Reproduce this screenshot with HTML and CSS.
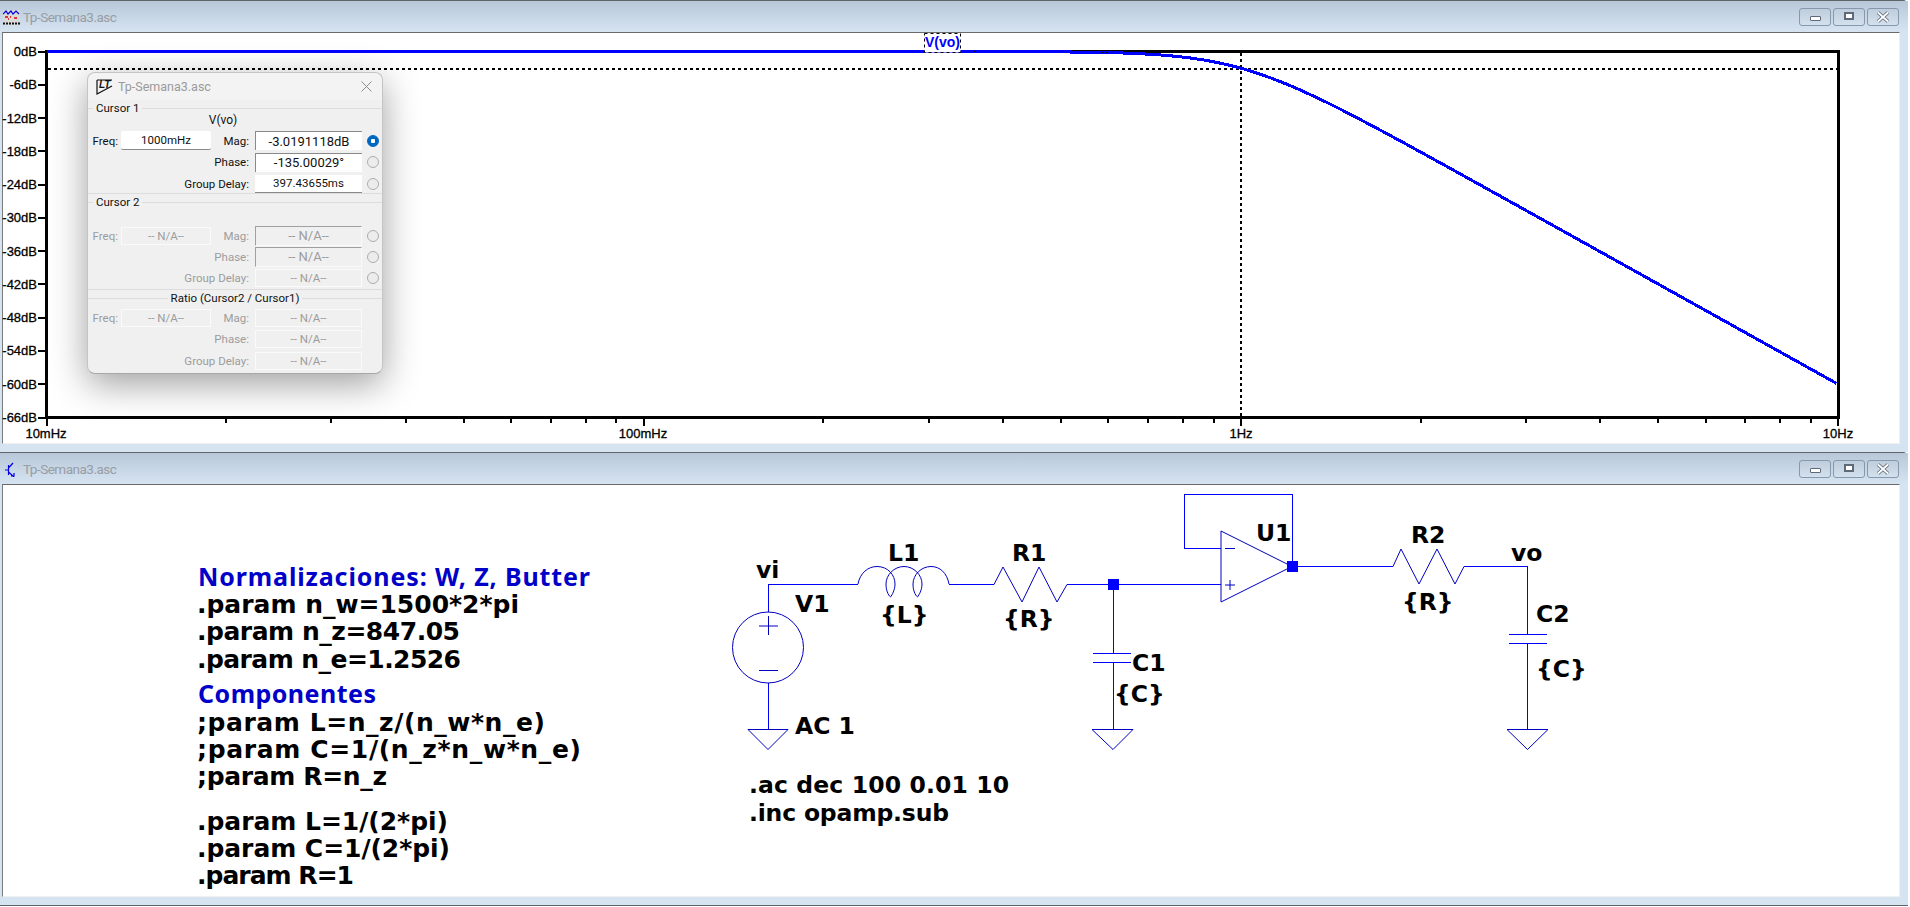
FILE: index.html
```html
<!DOCTYPE html>
<html lang="es">
<head>
    <meta charset="UTF-8">
    <title>Tp-Semana3.asc</title>
    <link rel="stylesheet" href="styles.css">
</head>
<body>
    <!-- ventana de la grafica -->
    <div class="win win-plot">
        <div class="win-title">
            <svg class="win-icon" width="17" height="16" viewBox="0 0 17 16">
                <rect x="0" y="1" width="17" height="15" fill="#d9d9d9"/>
                <path d="M0 5 3 2 5 5 8 2 10 5 13 2 16 5" fill="none" stroke="#0000e0" stroke-width="1.2"/>
                <path d="M2 8H5M7 8H8M11 9H14M5 10H6" stroke="#e00000" stroke-width="1.4"/>
                <path d="M0 14.5H17" stroke="#111" stroke-width="2" stroke-dasharray="2 1"/>
            </svg>
            <span class="win-name">Tp-Semana3.asc</span>
            <div class="win-btns">
                <button class="win-btn"><span class="ico-min"></span></button>
                <button class="win-btn"><span class="ico-max"></span></button>
                <button class="win-btn">
                    <svg width="14" height="12" viewBox="0 0 14 12">
                        <path d="M2 1.5 12 10.5M12 1.5 2 10.5" stroke="#5e6a78" stroke-width="3.6"/>
                        <path d="M2 1.5 12 10.5M12 1.5 2 10.5" stroke="#fff" stroke-width="1.8"/>
                    </svg>
                </button>
            </div>
        </div>
        <div class="win-client">
            <svg class="canvas" width="1896" height="410" viewBox="3 33 1896 410">
                <path id="ticks" class="ticks"/>
                <rect class="frame" x="46.5" y="51.5" width="1791.5" height="366"/>
                <path class="cursor-h" d="M48 69H1837"/>
                <path class="cursor-v" d="M1241 53V416"/>
                <polyline id="curve" class="curve"/>
                <rect class="trace-box" x="924.5" y="33.5" width="36" height="19"/>
                <text class="trace-name" x="942.5" y="47">V(vo)</text>
                <g class="axis-y">
                    <text x="37" y="56">0dB</text>
                    <text x="37" y="89">-6dB</text>
                    <text x="37" y="123">-12dB</text>
                    <text x="37" y="156">-18dB</text>
                    <text x="37" y="189">-24dB</text>
                    <text x="37" y="222">-30dB</text>
                    <text x="37" y="256">-36dB</text>
                    <text x="37" y="289">-42dB</text>
                    <text x="37" y="322">-48dB</text>
                    <text x="37" y="355">-54dB</text>
                    <text x="37" y="389">-60dB</text>
                    <text x="37" y="422">-66dB</text>
                </g>
                <g class="axis-x">
                    <text x="46" y="438">10mHz</text>
                    <text x="643" y="438">100mHz</text>
                    <text x="1241" y="438">1Hz</text>
                    <text x="1838" y="438">10Hz</text>
                </g>
            </svg>
        </div>

        <!-- cuadro de los cursores -->
        <div class="cursor-box">
            <div class="box-title">
                <svg width="17" height="17" viewBox="0 0 17 17">
                    <path d="M1 2V16L16 8" fill="none" stroke="#111" stroke-width="1.2"/>
                    <path d="M1 2H16" stroke="#111" stroke-width="1"/>
                    <text class="lt-logo" x="3" y="10">LT</text>
                </svg>
                <span class="box-name">Tp-Semana3.asc</span>
                <svg class="box-close" width="11" height="11" viewBox="0 0 11 11">
                    <path d="M.5.5 10.5 10.5M10.5.5 .5 10.5" stroke="#8c8c8c" stroke-width="1"/>
                </svg>
            </div>

            <div class="group group-one">
                <div class="legend"><span>Cursor 1</span></div>
                <div class="trace-label">V(vo)</div>
                <div class="rows">
                    <span class="lbl">Freq:</span>
                    <div class="field field-freq">1000mHz</div>
                    <span class="lbl lbl-mag">Mag:</span>
                    <div class="field field-inset big">-3.0191118dB</div>
                    <span class="radio radio-on"></span>

                    <span class="lbl lbl-wide">Phase:</span>
                    <div class="field field-inset big">-135.00029°</div>
                    <span class="radio"></span>

                    <span class="lbl lbl-wide">Group Delay:</span>
                    <div class="field field-low">397.43655ms</div>
                    <span class="radio"></span>
                </div>
            </div>

            <div class="group group-two off">
                <div class="legend"><span>Cursor 2</span></div>
                <div class="rows">
                    <span class="lbl">Freq:</span>
                    <div class="field field-off">-- N/A--</div>
                    <span class="lbl lbl-mag">Mag:</span>
                    <div class="field field-off-inset big">-- N/A--</div>
                    <span class="radio"></span>

                    <span class="lbl lbl-wide">Phase:</span>
                    <div class="field field-off-inset big">-- N/A--</div>
                    <span class="radio"></span>

                    <span class="lbl lbl-wide">Group Delay:</span>
                    <div class="field field-off">-- N/A--</div>
                    <span class="radio"></span>
                </div>
            </div>

            <div class="group group-three off">
                <div class="legend legend-mid"><span>Ratio (Cursor2 / Cursor1)</span></div>
                <div class="rows">
                    <span class="lbl">Freq:</span>
                    <div class="field field-off">-- N/A--</div>
                    <span class="lbl lbl-mag">Mag:</span>
                    <div class="field field-off">-- N/A--</div>
                    <span></span>

                    <span class="lbl lbl-wide">Phase:</span>
                    <div class="field field-off">-- N/A--</div>
                    <span></span>

                    <span class="lbl lbl-wide">Group Delay:</span>
                    <div class="field field-off">-- N/A--</div>
                    <span></span>
                </div>
            </div>
        </div>
    </div>

    <!-- ventana del esquematico -->
    <div class="win win-sch">
        <div class="win-title">
            <svg class="win-icon" width="17" height="16" viewBox="0 0 17 16">
                <path d="M2 9H5M5.5 4V14M5.5 7 10 2M5.5 11 11 16M8 15H11V12" fill="none" stroke="#0000e0" stroke-width="1.2"/>
            </svg>
            <span class="win-name">Tp-Semana3.asc</span>
            <div class="win-btns">
                <button class="win-btn"><span class="ico-min"></span></button>
                <button class="win-btn"><span class="ico-max"></span></button>
                <button class="win-btn">
                    <svg width="14" height="12" viewBox="0 0 14 12">
                        <path d="M2 1.5 12 10.5M12 1.5 2 10.5" stroke="#5e6a78" stroke-width="3.6"/>
                        <path d="M2 1.5 12 10.5M12 1.5 2 10.5" stroke="#fff" stroke-width="1.8"/>
                    </svg>
                </button>
            </div>
        </div>
        <div class="win-client">
            <svg class="canvas" width="1896" height="411" viewBox="3 485 1896 411">
                <!-- cables -->
                <path class="wire" d="M768.5 612V584.5H858M949 584.5H994M1067 584.5H1221M768.5 683V729M1113.5 584V653M1113.5 662V729"/>
                <path class="wire" d="M1221 548.5H1184.5V494.5H1292.5V566M1292 566.5H1393M1464 566.5H1527.5V634M1527.5 643V729"/>

                <!-- V1 -->
                <circle class="part" cx="768" cy="647.5" r="35.5"/>
                <path class="part" d="M759 626H778M768.5 616V635M759 670.5H778"/>

                <!-- L1 -->
                <path class="part" d="M858 584C860 573 868 566.5 877 566.5 888 566.5 895 575 895 584 895 590 892 595 890.5 597 888 595 886 590 886 584 886 575 894 566.5 904 566.5 914 566.5 922 575 922 584 922 590 919 595 917.5 597 915 595 913 590 913 584 913 575 921 566.5 931 566.5 940 566.5 947 573 949 584"/>

                <!-- R1 y R2 -->
                <path class="part" d="M994 584.5 1003 567 1022 602 1039 567 1057 602 1067 584.5"/>
                <path class="part" d="M1393 566.5 1401 549 1419 584 1437 549 1455 584 1464 566.5"/>

                <!-- C1 y C2 -->
                <path class="wire" d="M1093 653.5H1131M1093 662.5H1131M1509 634.5H1547M1509 643.5H1547"/>

                <!-- masas -->
                <path class="part" d="M748 729.5H788L768 749.5ZM1092 729.5H1133L1113 749.5ZM1507 729.5H1548L1527.5 749.5Z"/>

                <!-- U1 -->
                <path class="part" d="M1221 531V602L1292 566.5Z"/>
                <path class="part" d="M1225 548.5H1235M1225 585H1235M1230 580V590"/>

                <!-- nodos -->
                <rect class="node" x="1108" y="579" width="11" height="11"/>
                <rect class="node" x="1287" y="561" width="11" height="11"/>

                <!-- etiquetas -->
                <text class="sym" x="756" y="578">vi</text>
                <text class="sym" x="888" y="561">L1</text>
                <text class="sym" x="1012" y="561">R1</text>
                <text class="sym" x="795" y="612">V1</text>
                <text class="sym" x="880" y="623">{L}</text>
                <text class="sym" x="1003" y="627">{R}</text>
                <text class="sym" x="1132" y="671">C1</text>
                <text class="sym" x="1114" y="702">{C}</text>
                <text class="sym" x="795" y="734">AC 1</text>
                <text class="sym" x="1256" y="541">U1</text>
                <text class="sym" x="1411" y="543">R2</text>
                <text class="sym" x="1402" y="610">{R}</text>
                <text class="sym" x="1511" y="561">vo</text>
                <text class="sym" x="1536" y="622">C2</text>
                <text class="sym" x="1536" y="677">{C}</text>

                <text class="sym" x="749" y="793" textLength="260">.ac dec 100 0.01 10</text>
                <text class="sym" x="749" y="821" textLength="200">.inc opamp.sub</text>

                <text class="block note" x="198" y="586" textLength="392">Normalizaciones: W, Z, Butter</text>
                <text class="block" x="197" y="613" textLength="322">.param n_w=1500*2*pi</text>
                <text class="block" x="197" y="640" textLength="263">.param n_z=847.05</text>
                <text class="block" x="197" y="668" textLength="264">.param n_e=1.2526</text>
                <text class="block note" x="198" y="703" textLength="178">Componentes</text>
                <text class="block" x="197" y="731" textLength="348">;param L=n_z/(n_w*n_e)</text>
                <text class="block" x="197" y="758" textLength="384">;param C=1/(n_z*n_w*n_e)</text>
                <text class="block" x="197" y="785" textLength="190">;param R=n_z</text>
                <text class="block" x="197" y="830" textLength="251">.param L=1/(2*pi)</text>
                <text class="block" x="197" y="857" textLength="253">.param C=1/(2*pi)</text>
                <text class="block" x="197" y="884" textLength="157">.param R=1</text>
            </svg>
        </div>
    </div>

    <script src="plot.js"></script>
</body>
</html>
```

FILE: styles.css
```css
body {
    margin: 0;
    background: #fff;
    font-family: "Liberation Sans", sans-serif;
    overflow: hidden;
}

/* ventanas */
.win {
    position: relative;
    display: flex;
    flex-direction: column;
    box-sizing: border-box;
    width: 1908px;
    padding: 0 8px 8px 2px;
    background: #d6e4f2;
    border-top: 1px solid #5f6468;
    border-top-right-radius: 5px;
}
.win-plot {
    height: 452px;
}
.win-sch {
    height: 454px;
    border-bottom: 1px solid #5f6468;
}
.win-title {
    display: flex;
    align-items: center;
    flex: none;
    height: 31px;
    margin: 0 -8px 0 -2px;
    padding: 0 9px 0 3px;
    background: linear-gradient(#b8c8d8, #d6e4f2);
}
.win-icon {
    margin-right: 3px;
}
.win-name {
    color: #979da5;
    font-family: Roboto, sans-serif;
    font-size: 13.5px;
    letter-spacing: -.5px;
}
.win-btns {
    display: flex;
    gap: 2px;
    margin-left: auto;
}
.win-btn {
    display: flex;
    align-items: center;
    justify-content: center;
    box-sizing: border-box;
    width: 32px;
    height: 18px;
    padding: 0;
    background: linear-gradient(#bfcddc, #d3e0ed);
    border: 1px solid #8698ae;
    border-radius: 3px;
}
.ico-min {
    width: 9px;
    height: 3px;
    margin-top: 4px;
    background: #fff;
    border: 1px solid #5e6a78;
    border-radius: 1px;
}
.ico-max {
    width: 6px;
    height: 4px;
    margin-bottom: 2px;
    background: #fff;
    border: 2px solid #5e6a78;
}
.win-client {
    flex: 1;
    background: #fff;
    border-top: 1px solid #6a6a6a;
    border-left: 1px solid #7a7a7a;
    border-right: 1px solid #f0f0f0;
    border-bottom: 1px solid #f0f0f0;
    min-height: 0;
}
.canvas {
    display: block;
    overflow: visible;
}

/* grafica */
.ticks {
    fill: none;
    stroke: #000;
    stroke-width: 2;
    shape-rendering: crispEdges;
}
.frame {
    fill: none;
    stroke: #000;
    stroke-width: 3;
    shape-rendering: crispEdges;
}
.cursor-h {
    stroke: #000;
    stroke-width: 2;
    stroke-dasharray: 3 3;
    shape-rendering: crispEdges;
}
.cursor-v {
    stroke: #000;
    stroke-width: 1.5;
    stroke-dasharray: 3 3;
    shape-rendering: crispEdges;
}
.curve {
    fill: none;
    stroke: #0000ff;
    stroke-width: 3;
    shape-rendering: crispEdges;
}
.trace-box {
    fill: #fff;
    stroke: #000;
    stroke-width: 1;
    stroke-dasharray: 3 3;
}
.trace-name {
    fill: #0000ff;
    font-size: 14px;
    font-weight: 700;
    text-anchor: middle;
}
.axis-y text,
.axis-x text {
    font-size: 13px;
    stroke: #000;
    stroke-width: .3;
}
.axis-y text {
    text-anchor: end;
}
.axis-x text {
    text-anchor: middle;
}

/* cuadro de cursores */
.cursor-box {
    position: absolute;
    left: 87px;
    top: 71px;
    box-sizing: border-box;
    width: 296px;
    height: 302px;
    background: #f0f0f0;
    border: 1px solid #c4c4c4;
    border-bottom-color: #a8a8a8;
    border-radius: 8px;
    box-shadow: 0 10px 36px rgba(0, 0, 0, .38);
    color: #111;
    font-family: Roboto, sans-serif;
    font-size: 11.5px;
}
.box-title {
    display: flex;
    align-items: center;
    height: 27px;
    padding: 0 10px 0 8px;
    background: #f3f3f3;
    border-radius: 8px 8px 0 0;
}
.box-name {
    margin-left: 5px;
    color: #9a9a9a;
    font-size: 12.5px;
}
.box-close {
    margin-left: auto;
}
.lt-logo {
    fill: #111;
    font-family: "Liberation Sans", sans-serif;
    font-size: 10px;
    font-weight: 700;
    font-style: italic;
}
.group {
    box-sizing: border-box;
    border-bottom: 1px solid #dcdcdc;
}
.group-one {
    height: 94px;
}
.group-two {
    height: 96px;
}
.group-three {
    border-bottom: 0;
}
.legend {
    display: flex;
    align-items: center;
    height: 16px;
    gap: 3px;
}
.legend::before {
    content: "";
    flex: none;
    width: 5px;
    border-top: 1px solid #dcdcdc;
}
.legend::after {
    content: "";
    flex: 1;
    border-top: 1px solid #dcdcdc;
}
.legend-mid::before {
    flex: 1;
}
.off .lbl {
    color: #9c9c9c;
}
.trace-label {
    height: 12px;
    margin-top: -2px;
    margin-right: 24px;
    font-size: 12px;
    line-height: 12px;
    text-align: center;
}
.rows {
    display: grid;
    grid-template-columns: 33px 90px 44px 107px 18px;
    grid-auto-rows: 19px;
    row-gap: 2.5px;
    align-items: center;
    margin-top: 5px;
}
.group-two .rows {
    margin-top: 16px;
    row-gap: 2px;
}
.group-three .rows {
    margin-top: 2px;
}
.lbl {
    padding-right: 3px;
    text-align: right;
    white-space: nowrap;
}
.lbl-wide {
    grid-column: 1 / 4;
    padding-right: 6px;
}
.lbl-mag {
    padding-right: 6px;
}
.field {
    display: flex;
    align-items: center;
    justify-content: center;
    box-sizing: border-box;
    height: 19px;
    white-space: nowrap;
}
.big {
    font-size: 13px;
}
.field-freq {
    background: #fff;
    border-bottom: 1px solid #8a8a8a;
    border-radius: 2px;
}
.field-inset {
    background: #fff;
    border-top: 1px solid #8a8a8a;
    border-left: 1px solid #8a8a8a;
}
.field-low {
    height: 18px;
    background: #fff;
    border-bottom: 1px solid #8a8a8a;
}
.field-off {
    height: 18px;
    color: #9c9c9c;
    border: 1px solid #fafafa;
}
.field-off-inset {
    height: 20px;
    color: #9c9c9c;
    border: 1px solid #fafafa;
    border-top-color: #a0a0a0;
    border-left-color: #a0a0a0;
}
.radio {
    justify-self: end;
    box-sizing: border-box;
    width: 12px;
    height: 12px;
    margin-right: 1px;
    background: #ececec;
    border: 1px solid #adadad;
    border-radius: 50%;
}
.radio-on {
    background: radial-gradient(circle, #fff 2px, #0067c0 2.5px);
    border-color: #0067c0;
}

/* esquematico */
.wire {
    fill: none;
    stroke: #0000ff;
    stroke-width: 1;
    shape-rendering: crispEdges;
}
.part {
    fill: none;
    stroke: #0000c0;
    stroke-width: 1;
}
.node {
    fill: #0000ff;
}
.sym {
    font-family: "DejaVu Sans", sans-serif;
    font-size: 23.5px;
    font-weight: 700;
    fill: #000;
}
.block {
    font-family: "DejaVu Sans", sans-serif;
    font-size: 25px;
    font-weight: 700;
    fill: #000;
}
.note {
    font-family: "Noto Sans", sans-serif;
    fill: #0000c8;
}
```

FILE: plot.js
```js
// plot area in page coordinates: 10mHz..10Hz, 0dB..-66dB
const left = 46.5, right = 1838, top_ = 51.5, bottom = 417.5;
const decade = (right - left) / 3;
const dbPx = (bottom - top_) / 66;

function magnitud(f) {
    return -10 * Math.log10(1 + Math.pow(f, 6));
}

const puntos = [];
for (let x = left; x <= right; x += 2) {
    const f = Math.pow(10, (x - left) / decade - 2);
    puntos.push(x.toFixed(1) + ',' + (top_ - magnitud(f) * dbPx).toFixed(1));
}
document.getElementById('curve').setAttribute('points', puntos.join(' '));

let d = '';
for (let i = 0; i <= 11; i++) {
    const y = Math.round(top_ + i * 6 * dbPx);
    d += `M38 ${y}H45`;
}
for (let dec = 0; dec < 3; dec++) {
    for (let n = 1; n <= 9; n++) {
        const x = Math.round(left + (dec + Math.log10(n)) * decade);
        d += `M${x} 418V${n === 1 ? 426 : 423}`;
    }
}
d += `M${Math.round(right)} 418V426`;
document.getElementById('ticks').setAttribute('d', d);
```
